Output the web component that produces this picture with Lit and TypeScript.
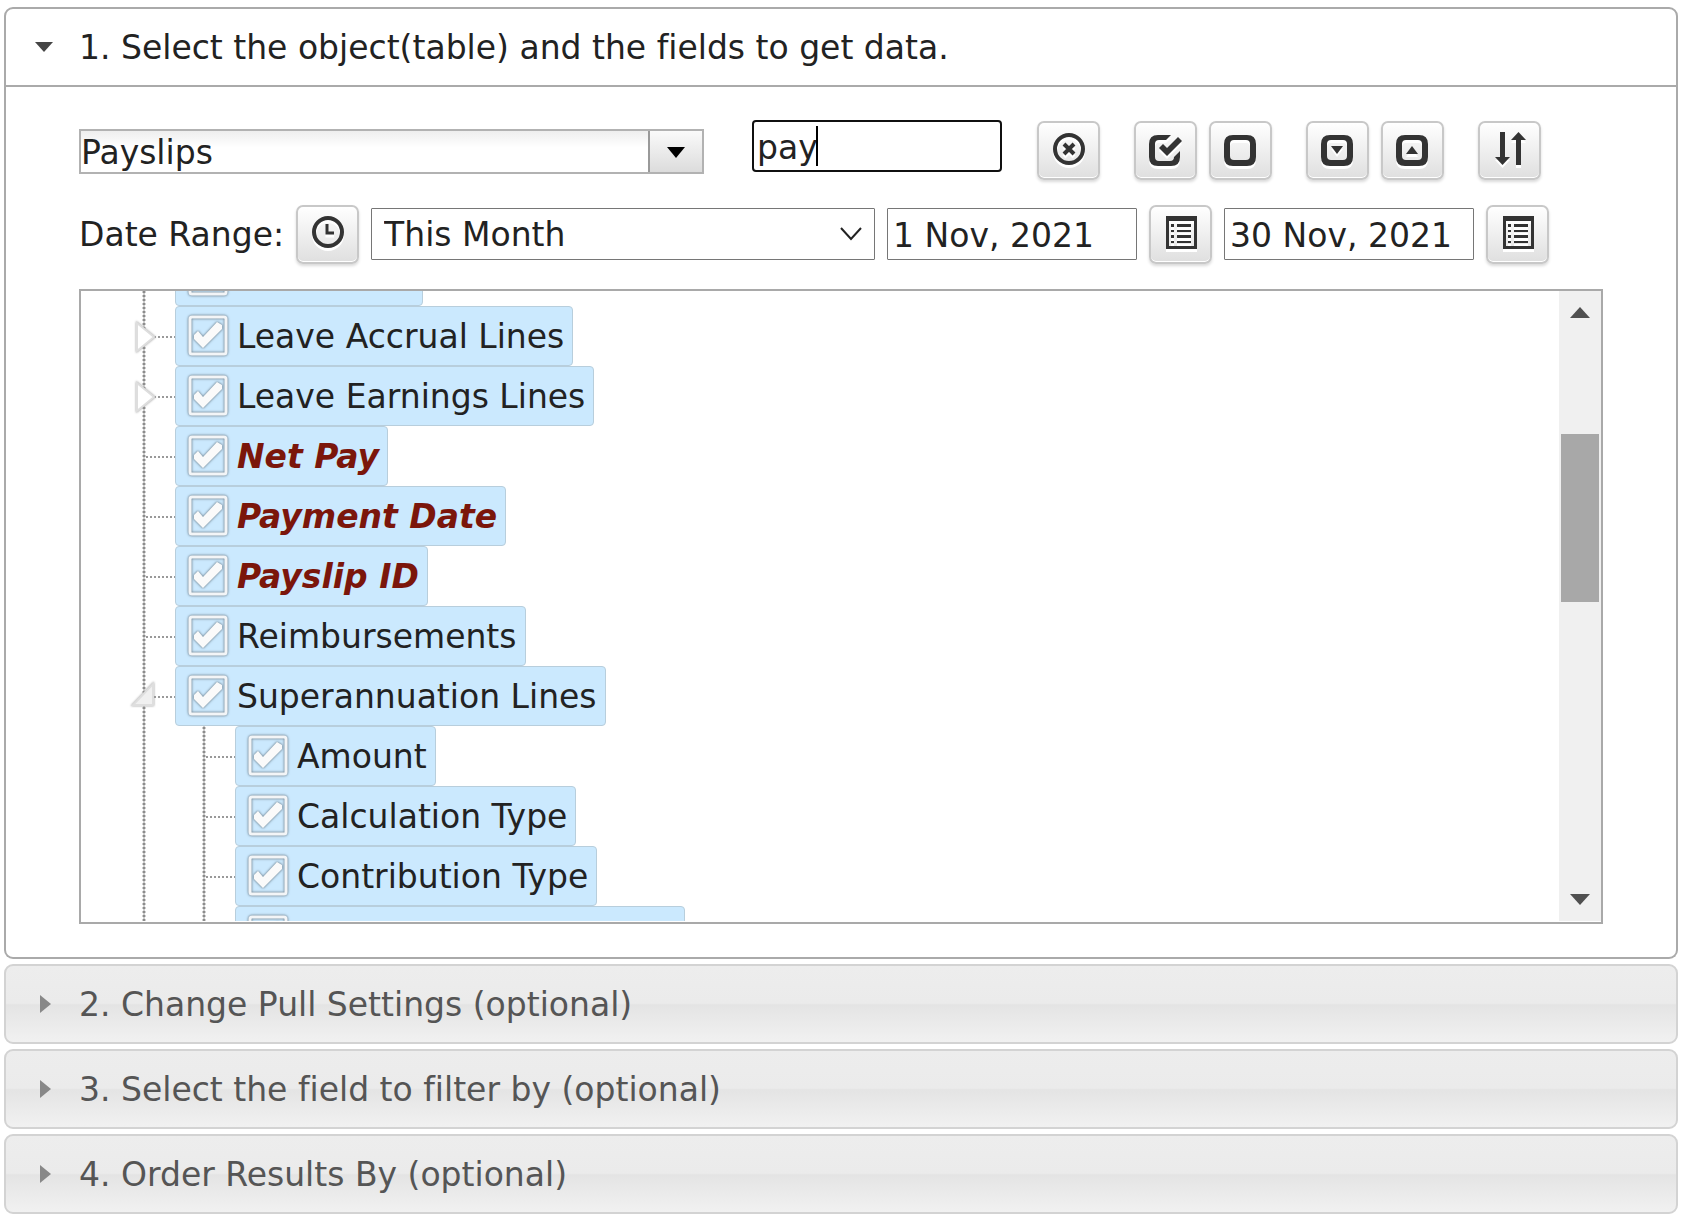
import { LitElement, html, svg, css, nothing } from "lit";
import { customElement } from "lit/decorators.js";

type Node = { label: string; match?: boolean; state?: "closed" | "open"; children?: Node[] };

const TREE: Node[] = [
  { label: "Last Name" },
  { label: "Leave Accrual Lines", state: "closed" },
  { label: "Leave Earnings Lines", state: "closed" },
  { label: "Net Pay", match: true },
  { label: "Payment Date", match: true },
  { label: "Payslip ID", match: true },
  { label: "Reimbursements" },
  {
    label: "Superannuation Lines",
    state: "open",
    children: [
      { label: "Amount" },
      { label: "Calculation Type" },
      { label: "Contribution Type" },
      { label: "Expense Account Code" },
    ],
  },
];

const box = svg`<path fill-rule="evenodd" d="M8 0H22Q31 0 31 9V22Q31 31 22 31H8Q-1 31 -1 22V9Q-1 0 8 0ZM9 5Q5 5 5 9V21Q5 25 9 25H21Q25 25 25 21V9Q25 5 21 5Z"/>`;

const ICONS = {
  clear: svg`<circle cx="15" cy="15" r="14" fill="none" stroke="currentColor" stroke-width="4"/><path d="M10 10L20 20M20 10L10 20" stroke="currentColor" stroke-width="4"/>`,
  check: svg`<g transform="translate(-1 1)"><path d="M21 0H8Q-1 0 -1 9V22Q-1 31 8 31H21Q30 31 30 22V16L24 22Q24 26 20 26H9Q5 26 5 22V9Q5 5 9 5H16Z"/><path d="M9 13L13 9L17 13L28 2L32 6L17 21Z"/></g>`,
  uncheck: svg`<g transform="translate(-1 1)">${box}</g>`,
  expand: svg`<g transform="translate(-1 1)">${box}<path d="M9 11H21L15 19Z"/></g>`,
  collapse: svg`<g transform="translate(-1 1)">${box}<path d="M9 19H21L15 11Z"/></g>`,
  sort: svg`<path d="M5 -2H10V23H15L7.500 31L0 23H5ZM21 31H26V6H31L23.500 -2L16 6H21Z"/>`,
  clock: svg`<circle cx="15" cy="14" r="14" fill="none" stroke="currentColor" stroke-width="4"/><path d="M14 6V15H21" fill="none" stroke="currentColor" stroke-width="3"/>`,
  list: svg`<g transform="translate(0 -1)"><path fill-rule="evenodd" d="M0 -1H31V32H0ZM3 4V29H28V4Z"/><path d="M5 7H8V10H5ZM11 7H25V10H11ZM5 13H8V15H5ZM11 13H25V15H11ZM5 18H8V21H5ZM11 18H25V21H11ZM5 24H8V26H5ZM11 24H25V26H11Z"/></g>`,
};

@customElement("app-root")
export class AppRoot extends LitElement {
  static styles = css`
    :host {
      display: block;
      box-sizing: border-box;
      padding: 7px 8px 5px 4px;
      background: #fff;
      color: #222;
      font: 33px/40px "DejaVu Sans", Verdana, sans-serif;
      font-variant-ligatures: none;
    }
    * { box-sizing: border-box; }
    button, input, select { font: inherit; color: inherit; margin: 0; font-variant-ligatures: none; }
    .accordion { display: flex; flex-direction: column; gap: 5px; }
    .title { margin: 0; font: inherit; font-variant-ligatures: none; }
    .head {
      display: flex;
      align-items: center;
      width: 100%;
      height: 80px;
      padding: 0 24px;
      gap: 21px;
      text-align: left;
      color: #555;
      border: 2px solid #d3d3d3;
      border-radius: 9px;
      background: linear-gradient(#ededed, #ebebeb 49%, #e4e4e4 51%, #f1f1f1);
    }
    .head span { padding-top: 2px; }
    .arrow { flex: none; width: 28px; height: 28px; fill: #888; }
    .head.open {
      color: #222;
      border-color: #aaa;
      border-radius: 9px 9px 0 0;
      background: #fff;
    }
    .head.open .arrow { fill: #454545; }
    .panel {
      display: flex;
      flex-direction: column;
      padding: 33px 73px 33px;
      border: 2px solid #aaa;
      border-top: 0;
      border-radius: 0 0 9px 9px;
    }
    .row { display: flex; height: 60px; align-items: center; }
    .dates { gap: 12px; margin-top: 24px; }
    .dates label { white-space: nowrap; padding-top: 2px; }
    .combo {
      flex: 0 1 625px;
      display: flex;
      align-self: flex-end;
      height: 45px;
      margin: 0 48px 6px 0;
      border: 2px solid #b2b2b2;
    }
    .combo-text {
      flex: 1;
      min-width: 0;
      height: 100%;
      padding: 2px 0 0;
      border: 0;
      outline: 0;
      background: linear-gradient(#eee, #fff 40%);
    }
    .combo-btn {
      display: grid;
      place-items: center;
      flex: none;
      width: 54px;
      padding: 0;
      border: 0;
      border-left: 2px solid #999;
      background: linear-gradient(#fafafa, #dcdcdc);
    }
    .combo-btn svg { width: 18px; height: 12px; fill: #000; }
    .search { display: grid; align-self: flex-start; flex: 0 1 250px; margin-right: 35px; }
    .search > * { grid-area: 1 / 1; }
    .field {
      width: 100%;
      min-width: 0;
      height: 52px;
      padding: 2px 5px 0;
      border: 1px solid #767676;
      border-radius: 1px;
      background: #fff;
      outline: 0;
    }
    .search .field { border: 2px solid #101010; border-radius: 4px; padding: 2px 3px 0; caret-color: transparent; }
    .caret { width: 2px; height: 40px; margin: 6px 0 0 64px; background: #000; }
    .tools { display: flex; align-self: flex-end; gap: 34px; }
    .pair { display: flex; gap: 12px; }
    .tool {
      display: grid;
      place-items: center;
      flex: none;
      width: 63px;
      height: 59px;
      padding: 0 0 3px;
      color: #333;
      border: 2px solid #c8c8c8;
      border-radius: 7px;
      background: linear-gradient(#fff, #dfdfdf);
      box-shadow: inset 0 -1px 0 #fff, 0 2px 3px rgba(0, 0, 0, 0.15);
    }
    .tool svg {
      width: 30px;
      height: 30px;
      overflow: visible;
      fill: currentColor;
      filter: drop-shadow(0 3px 0 #fff);
    }
    .range { flex: 0 1 504px; display: grid; align-items: center; }
    .range > * { grid-area: 1 / 1; }
    .range .field { appearance: none; padding: 2px 50px 0 12px; }
    .chev {
      justify-self: end;
      width: 22px;
      height: 14px;
      margin-right: 13px;
      fill: none;
      stroke: #222;
      stroke-width: 2;
      pointer-events: none;
    }
    .date { flex: 0 1 250px; min-width: 0; }
    .tree-box {
      display: flex;
      height: 635px;
      margin-top: 25px;
      padding-bottom: 1px;
      border: 2px solid #a9a9a9;
    }
    .scroller { flex: 1; min-width: 0; overflow: hidden; }
    .tree, .branch { list-style: none; margin: 0; padding: 0; }
    .tree { padding-left: 34px; }
    .branch { grid-column: 2; }
    .item {
      display: grid;
      grid-template-columns: 60px 1fr;
      background: radial-gradient(circle, #8c8c8c 1px, transparent 2px) 27px 0 / 4px 4px repeat-y;
    }
    .elbow { width: 60px; height: 60px; display: block; overflow: visible; }
    .toggle { stroke: #dedede; stroke-width: 2; filter: drop-shadow(0 0 1px #999); }
    .node {
      justify-self: start;
      display: flex;
      align-items: center;
      height: 60px;
      padding: 0 8px 0 12px;
      gap: 9px;
      color: #222;
      white-space: nowrap;
      background: #cbe9fe;
      border: 1px solid #b8cedc;
      border-radius: 4px;
    }
    .node.match { color: #7b160b; font-weight: bold; font-style: italic; }
    .text { padding-top: 2px; }
    .tick { display: grid; width: 40px; height: 40px; margin-bottom: 2px; }
    .tick > * { grid-area: 1 / 1; width: 40px; height: 40px; margin: 0; }
    .tick input { appearance: none; }
    .tick svg { overflow: visible; pointer-events: none; filter: drop-shadow(0 0 1px #6d8496) drop-shadow(0 0 1px #a3b8c6); }
    .bar {
      flex: none;
      display: flex;
      flex-direction: column;
      align-items: center;
      width: 42px;
      padding: 16px 0;
      background: #f0f0f0;
    }
    .bar svg { flex: none; width: 20px; height: 11px; fill: #505050; }
    .track { flex: 1; width: 38px; display: flex; flex-direction: column; }
    .before { flex: 116; }
    .thumb { flex: 168; background: #a8a8a8; }
    .after { flex: 292; }
  `;

  firstUpdated() {
    const scroller = this.renderRoot.querySelector(".scroller");
    if (scroller) scroller.scrollTop = 45;
  }

  tool(name: keyof typeof ICONS, label: string) {
    return html`<button class="tool" type="button" aria-label=${label} title=${label}>
      <svg viewBox="0 0 30 30" aria-hidden="true">${ICONS[name]}</svg>
    </button>`;
  }

  section(label: string) {
    return html`<h3 class="title"><button class="head" type="button" aria-expanded="false">
      <svg class="arrow" viewBox="0 0 28 28" aria-hidden="true"><path d="M10 5L21 14L10 23Z"/></svg><span>${label}</span>
    </button></h3>`;
  }

  node(n: Node): unknown {
    return html`<li class="item">
      <svg class="elbow" viewBox="0 0 60 60" aria-hidden="true">
        <path d="M31 31H60" stroke="#999" stroke-width="2" stroke-dasharray="2 2"/>
        ${n.state === "closed"
          ? svg`<path class="toggle" d="M22 17V45L39 31Z" fill="#fff"/>`
          : n.state === "open"
            ? svg`<path class="toggle" d="M38 18V39H18Z" fill="#f0f0f0"/>`
            : nothing}
      </svg>
      <label class="node ${n.match ? "match" : ""}">
        <span class="tick">
          <input type="checkbox" checked />
          <svg viewBox="0 0 40 40" aria-hidden="true">
            <rect x="2" y="2" width="36" height="37" rx="2" fill="none" stroke="#f3f5f7" stroke-width="3"/>
            <path d="M6 20L10 16L15 22L29 7L34 10V14L15 33L6 24Z" fill="#fafafa"/>
          </svg>
        </span>
        <span class="text">${n.label}</span>
      </label>
      ${n.children ? html`<ul class="branch">${n.children.map((c) => this.node(c))}</ul>` : nothing}
    </li>`;
  }

  render() {
    return html`<main class="accordion">
      <section>
        <h3 class="title"><button class="head open" type="button" aria-expanded="true">
          <svg class="arrow" viewBox="0 0 28 28" aria-hidden="true"><path d="M5 9H23L14 19Z"/></svg><span>1. Select the object(table) and the fields to get data.</span>
        </button></h3>
        <div class="panel">
          <div class="row">
            <div class="combo">
              <input class="combo-text" aria-label="Object" .value=${"Payslips"} />
              <button class="combo-btn" type="button" aria-label="Show objects">
                <svg viewBox="0 0 18 12" aria-hidden="true"><path d="M0 1H18L9 12Z"/></svg>
              </button>
            </div>
            <div class="search">
              <input class="field" aria-label="Search fields" .value=${"pay"} />
              <span class="caret"></span>
            </div>
            <div class="tools">
              ${this.tool("clear", "Clear search")}
              <div class="pair">${this.tool("check", "Check all")}${this.tool("uncheck", "Uncheck all")}</div>
              <div class="pair">${this.tool("expand", "Expand all")}${this.tool("collapse", "Collapse all")}</div>
              ${this.tool("sort", "Sort fields")}
            </div>
          </div>
          <div class="row dates">
            <label for="range">Date Range:</label>
            ${this.tool("clock", "Date field")}
            <div class="range">
              <select id="range" class="field"><option>This Month</option></select>
              <svg class="chev" viewBox="0 0 22 14" aria-hidden="true"><path d="M1 1L11 12L21 1"/></svg>
            </div>
            <div class="date"><input class="field" aria-label="From" .value=${"1 Nov, 2021"} /></div>
            ${this.tool("list", "Pick start date")}
            <div class="date"><input class="field" aria-label="To" .value=${"30 Nov, 2021"} /></div>
            ${this.tool("list", "Pick end date")}
          </div>
          <div class="tree-box">
            <div class="scroller"><ul class="tree">${TREE.map((n) => this.node(n))}</ul></div>
            <div class="bar" aria-hidden="true">
              <svg viewBox="0 0 20 11"><path d="M0 11L10 0L20 11Z"/></svg>
              <div class="track"><div class="before"></div><div class="thumb"></div><div class="after"></div></div>
              <svg viewBox="0 0 20 11"><path d="M0 0L10 11L20 0Z"/></svg>
            </div>
          </div>
        </div>
      </section>
      ${this.section("2. Change Pull Settings (optional)")}
      ${this.section("3. Select the field to filter by (optional)")}
      ${this.section("4. Order Results By (optional)")}
    </main>`;
  }
}
